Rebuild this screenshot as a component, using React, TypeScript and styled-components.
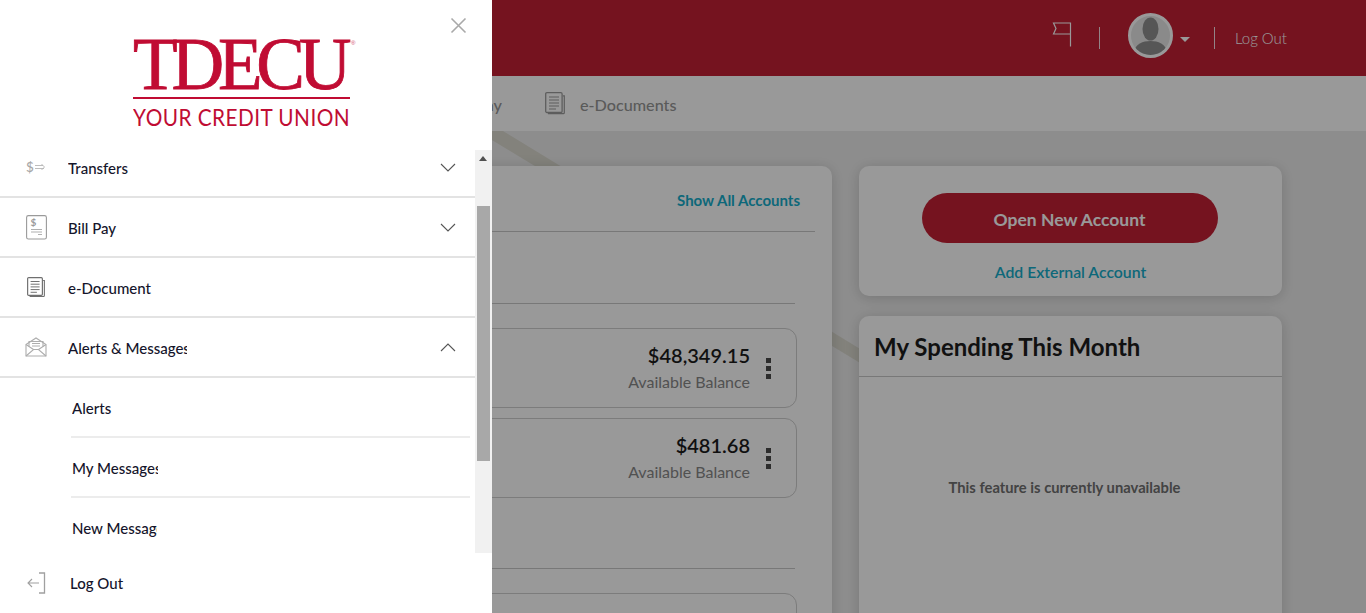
import React from "react";
import styled, { createGlobalStyle } from "styled-components";

const Global = createGlobalStyle`
  html, body { margin: 0; padding: 0; height: 100%; overflow: hidden; }
  body { font-family: Lato, "Liberation Sans", sans-serif; background: #ececec; }
  * { box-sizing: border-box; }
`;

const Page = styled.div`
  position: relative;
  width: 1366px;
  height: 613px;
  overflow: hidden;
  background: #ececec;
`;

/* ---------- page behind the drawer ---------- */
const Header = styled.header`
  height: 76px;
  background: #c32035;
  display: flex;
  align-items: center;
  justify-content: flex-end;
  padding-right: 79px;
  color: #fff;
`;
const FlagWrap = styled.div`
  display: flex;
  margin: -8px 27px 0 0;
`;
const VRule = styled.div`
  width: 1px;
  height: 22px;
  background: #ffffff;
  opacity: 0.85;
`;
const Avatar = styled.div`
  width: 45px;
  height: 45px;
  border-radius: 50%;
  border: 3px solid #fff;
  background: #e6e6e6;
  overflow: hidden;
  margin: -6px 7px 0 28px;
  display: flex;
`;
const Caret = styled.div`
  width: 0;
  height: 0;
  border-left: 5px solid transparent;
  border-right: 5px solid transparent;
  border-top: 5px solid #fff;
  margin: 2px 24px 0 0;
`;
const HeaderLink = styled.span`
  font-size: 15px;
  font-weight: 300;
  margin: -1px 0 0 20px;
`;
const Nav = styled.nav`
  height: 55px;
  background: #ffffff;
  display: flex;
  align-items: center;
  padding: 1px 0 0 450px;
`;
const NavText = styled.span`
  font-size: 16.2px;
  font-weight: 500;
  color: #969696;
`;
const NavIcon = styled.span`
  display: flex;
  margin: -2px 15px 0 43px;
`;
const Main = styled.main`
  position: relative;
  display: grid;
  grid-template-columns: 748px 423px;
  column-gap: 27px;
  align-items: start;
  padding: 35px 0 0 84px;
`;
const Stripe = styled.svg`
  position: absolute;
  left: 0;
  top: 0;
  width: 1366px;
  height: 482px;
`;
const Card = styled.section<{ $h?: number }>`
  position: relative;
  background: #fff;
  border-radius: 10px;
  box-shadow: 0 2px 14px rgba(0, 0, 0, 0.17);
  ${(p) => (p.$h ? `height: ${p.$h}px;` : "")}
`;
const Column = styled.div`
  display: flex;
  flex-direction: column;
  gap: 20px;
`;
const AccountsHead = styled.div`
  height: 66px;
  margin: 0 17px;
  padding: 2px 15px 0 0;
  border-bottom: 1px solid #c9c9c9;
  display: flex;
  align-items: center;
  justify-content: flex-end;
`;
const TealLink = styled.a`
  color: #17aecb;
  font-weight: 700;
  font-size: 15px;
`;
const Section = styled.div`
  margin: 0 37px 0 17px;
  height: 72px;
  border-bottom: 1px solid #c9c9c9;
`;
const Rows = styled.div`
  display: flex;
  flex-direction: column;
  gap: 10px;
  padding: 24px 35px 0 17px;
`;
const AccountRow = styled.div`
  height: 80px;
  border: 1px solid #cfcfcf;
  border-radius: 12px;
  display: flex;
  justify-content: flex-end;
  align-items: center;
  padding-right: 25px;
`;
const Balance = styled.div`
  text-align: right;
  display: flex;
  flex-direction: column;
  gap: 3px;
  margin-top: -1px;
  transform: translateY(-1px);
`;
const Amount = styled.div`
  font-size: 20px;
  font-weight: 600;
  color: #1c1c1c;
  line-height: 28px;
`;
const BalanceLabel = styled.div`
  font-size: 16px;
  color: #888888;
  line-height: 20px;
`;
const Dots = styled.div`
  display: flex;
  flex-direction: column;
  gap: 3px;
  margin: 0 0 0 16px;
`;
const Dot = styled.i`
  display: block;
  width: 5px;
  height: 5px;
  background: #4a4a4a;
`;
const Divider = styled.div`
  margin: 70px 37px 0 17px;
  border-bottom: 1px solid #c9c9c9;
`;
const OpenCard = styled(Card)`
  height: 130px;
  display: flex;
  flex-direction: column;
  align-items: center;
  padding: 27px 0 0 0;
`;
const OpenButton = styled.button`
  width: 296px;
  height: 50px;
  margin-right: 2px;
  border: 0;
  border-radius: 25px;
  background: #c32035;
  color: #fff;
  font: 700 17.5px Lato, sans-serif;
  padding: 2px 0 0;
`;
const AddLink = styled(TealLink)`
  margin-top: 19px;
  line-height: 20px;
  font-size: 15.8px;
  font-weight: 600;
`;
const SpendTitle = styled.h2`
  margin: 0;
  height: 61px;
  padding: 0 0 0 15px;
  display: flex;
  align-items: center;
  font-size: 24px;
  font-weight: 700;
  color: #1d1d1d;
  border-bottom: 1px solid #c9c9c9;
`;
const Unavailable = styled.div`
  padding-top: 101px;
  text-align: center;
  font-size: 14.75px;
  font-weight: 700;
  color: #707070;
  margin-right: 12px;
`;

/* ---------- overlay + drawer ---------- */
const Backdrop = styled.div`
  position: absolute;
  inset: 0;
  background: rgba(0, 0, 0, 0.4);
`;
const Drawer = styled.aside`
  position: absolute;
  left: 0;
  top: 0;
  width: 492px;
  height: 613px;
  background: #fff;
  display: flex;
  flex-direction: column;
`;
const Close = styled.button`
  position: absolute;
  left: 450px;
  top: 17px;
  width: 17px;
  height: 17px;
  padding: 0;
  border: 0;
  background: none;
  display: flex;
`;
const Logo = styled.div`
  height: 150px;
  padding: 32px 0 0 133px;
  color: #c00c33;
  display: flex;
  flex-direction: column;
  flex: none;
`;
const LogoMark = styled.div`
  position: relative;
  font-family: "Liberation Serif", serif;
  font-size: 73px;
  line-height: 66px;
  height: 65px;
  letter-spacing: -6.2px;
  white-space: nowrap;
  -webkit-text-stroke: 0.8px #c00c33;
`;
const Reg = styled.sup`
  position: absolute;
  left: 218px;
  top: 8px;
  font: 400 6px/6px "Liberation Sans", sans-serif;
  letter-spacing: 0;
  color: #d0496a;
  -webkit-text-stroke: 0;
`;
const LogoRule = styled.div`
  width: 217px;
  height: 2px;
  background: #c00c33;
`;
const LogoTag = styled.div`
  font-size: 23.5px;
  font-weight: 400;
  line-height: 24px;
  margin-top: 6px;
  letter-spacing: 0.5px;
  white-space: nowrap;
  transform: scaleX(0.885);
  transform-origin: 0 0;
`;
const Scroller = styled.div`
  height: 403px;
  display: flex;
  flex: none;
  overflow: hidden;
`;
const List = styled.ul`
  list-style: none;
  margin: -12px 0 0;
  padding: 0;
  width: 475px;
  flex: none;
`;
const Row = styled.li`
  height: 60px;
  border-bottom: 2px solid #e3e3e3;
  display: flex;
  align-items: center;
  padding: 0 19px 0 25px;
  color: #15152b;
  font-size: 15px;
  font-weight: 500;
`;
const IconCell = styled.span`
  width: 22px;
  height: 26px;
  margin-right: 21px;
  display: flex;
  align-items: center;
  justify-content: center;
  flex: none;
`;
const RowLabel = styled.span<{ $w?: number }>`
  flex: ${(p) => (p.$w ? "none" : "1")};
  ${(p) => (p.$w ? `width: ${p.$w}px;` : "")}
  overflow: hidden;
  white-space: nowrap;
  padding-top: 2px;
`;
const Chevron = styled.svg`
  margin-left: auto;
  flex: none;
`;
const SubRow = styled.li<{ $last?: boolean }>`
  height: 60px;
  margin: 0 5px 0 71px;
  padding-left: 1px;
  border-bottom: 2px solid ${(p) => (p.$last ? "transparent" : "#ececec")};
  display: flex;
  align-items: center;
  color: #15152b;
  font-size: 15px;
  font-weight: 500;
`;
const Track = styled.div`
  width: 17px;
  background: #f1f1f1;
  position: relative;
  flex: none;
  padding-top: 56px;
`;
const TrackArrow = styled.i`
  position: absolute;
  left: 4px;
  top: 6px;
  width: 0;
  height: 0;
  border-left: 4px solid transparent;
  border-right: 4px solid transparent;
  border-bottom: 5px solid #505050;
`;
const Thumb = styled.div`
  width: 13px;
  height: 255px;
  margin-left: 2px;
  background: #a8a8a8;
`;
const Footer = styled.div`
  height: 60px;
  display: flex;
  align-items: center;
  padding-left: 26px;
  color: #15152b;
  font-size: 15px;
  font-weight: 500;
`;
const FooterIcon = styled.span`
  width: 22px;
  display: flex;
  margin-right: 22px;
`;

/* ---------- drawings ---------- */
const DocIcon = ({ s = 18, c = "#6f6f6f" }: { s?: number; c?: string }) => (
  <svg width={s} height={s * 1.15} viewBox="0 0 20 23" fill="none" stroke={c}>
    <path d="M3.5 20.5v1.2h14.8a1 1 0 0 0 1-1V3.8h-1.4" strokeWidth="1.2" />
    <rect x="0.7" y="0.7" width="16.4" height="19.8" rx="1.2" strokeWidth="1.3" />
    <path d="M4 5h10M4 8h10M4 11h10M4 14h10M4 17h7" strokeWidth="1.1" />
  </svg>
);
const TransferIcon = () => (
  <svg width="20" height="14" viewBox="0 0 20 14" fill="none">
    <text x="0" y="12" fontFamily="Lato" fontSize="13.5" fill="#a8a8a8">$</text>
    <path d="M9 5.5h8M9 8.5h9M15.5 4 18.5 7l-3 3" stroke="#b5b5b5" strokeWidth="0.9" />
  </svg>
);
const BillIcon = () => (
  <svg width="21" height="25" viewBox="0 0 21 25" fill="none">
    <rect x="0.6" y="0.6" width="19.8" height="23.4" rx="1.8" stroke="#9a9a9a" strokeWidth="1.1" />
    <text x="4.5" y="11" fontFamily="Lato" fontSize="10" fontWeight="700" fill="#9a9a9a">$</text>
    <path d="M5 14.5h11M5 17h11M12 19.5h4" stroke="#b0b0b0" strokeWidth="1.2" />
  </svg>
);
const MailIcon = () => (
  <svg width="22" height="20" viewBox="0 0 22 20" fill="none" stroke="#adadad" strokeWidth="1.1">
    <path d="M1 7.5 11 1l10 6.5V19H1z" />
    <path d="M1 19l7.5-6.5h5L21 19" />
    <path d="M1 7.5l7.5 5M21 7.5l-7.5 5" />
    <path d="M4 9.5V4.5h14v5M7 6.5h8M7 9h8" />
  </svg>
);
const LogoutIcon = () => (
  <svg width="20" height="22" viewBox="0 0 20 22" fill="none" stroke="#a0a0a0" strokeWidth="1.1">
    <path d="M13 1h5.5v20H13" strokeWidth="1.3" />
    <path d="M2 11h11M6 7l-4 4 4 4" />
  </svg>
);
const ChevronIcon = ({ up }: { up?: boolean }) => (
  <Chevron width="16" height="9" viewBox="0 0 16 9" fill="none" stroke="#555" strokeWidth="1.1">
    <path d={up ? "M1 8l7-7 7 7" : "M1 1l7 7 7-7"} />
  </Chevron>
);

export default function App() {
  return (
    <Page>
      <Global />
      <Header>
        <FlagWrap>
          <svg width="20" height="26" viewBox="0 0 20 26" fill="none" stroke="#fff" strokeWidth="1.2">
            <path d="M18.5 25.5V2H1.5l2.5 5.5L1.5 13h17" />
          </svg>
        </FlagWrap>
        <VRule />
        <Avatar>
          <svg width="39" height="39" viewBox="0 0 39 39">
            <ellipse cx="19.5" cy="13" rx="8" ry="11.5" fill="#8f8f8f" />
            <path d="M3 36c1-8 9-11 16.5-11S35 28 36 36c-5 4-28 4-33 0z" fill="#8f8f8f" />
          </svg>
        </Avatar>
        <Caret />
        <VRule />
        <HeaderLink>Log Out</HeaderLink>
      </Header>
      <Nav>
        <NavText>Bill Pay</NavText>
        <NavIcon>
          <DocIcon s={20} c="#9c9c9c" />
        </NavIcon>
        <NavText>e-Documents</NavText>
      </Nav>
      <Main>
        <Stripe viewBox="0 0 1366 482">
          <polygon points="477,0 503,0 870,224 870,238" fill="#dad9cf" />
        </Stripe>
        <Card $h={600}>
          <AccountsHead>
            <TealLink>Show All Accounts</TealLink>
          </AccountsHead>
          <Section />
          <Rows>
            <AccountRow>
              <Balance>
                <Amount>$48,349.15</Amount>
                <BalanceLabel>Available Balance</BalanceLabel>
              </Balance>
              <Dots><Dot /><Dot /><Dot /></Dots>
            </AccountRow>
            <AccountRow>
              <Balance>
                <Amount>$481.68</Amount>
                <BalanceLabel>Available Balance</BalanceLabel>
              </Balance>
              <Dots><Dot /><Dot /><Dot /></Dots>
            </AccountRow>
          </Rows>
          <Divider />
          <Rows>
            <AccountRow />
          </Rows>
        </Card>
        <Column>
          <OpenCard>
            <OpenButton>Open New Account</OpenButton>
            <AddLink>Add External Account</AddLink>
          </OpenCard>
          <Card $h={400}>
            <SpendTitle>My Spending This Month</SpendTitle>
            <Unavailable>This feature is currently unavailable</Unavailable>
          </Card>
        </Column>
      </Main>
      <Backdrop />
      <Drawer>
        <Close aria-label="Close">
          <svg width="17" height="17" viewBox="0 0 17 17" stroke="#a9a9a9" strokeWidth="1.6" fill="none">
            <path d="M1.5 1.5l14 14M15.5 1.5l-14 14" />
          </svg>
        </Close>
        <Logo>
          <LogoMark>
            TDECU
            <Reg>®</Reg>
          </LogoMark>
          <LogoRule />
          <LogoTag>YOUR CREDIT UNION</LogoTag>
        </Logo>
        <Scroller>
          <List>
            <Row>
              <IconCell><TransferIcon /></IconCell>
              <RowLabel>Transfers</RowLabel>
              <ChevronIcon />
            </Row>
            <Row>
              <IconCell><BillIcon /></IconCell>
              <RowLabel>Bill Pay</RowLabel>
              <ChevronIcon />
            </Row>
            <Row>
              <IconCell><DocIcon /></IconCell>
              <RowLabel>e-Document</RowLabel>
            </Row>
            <Row>
              <IconCell><MailIcon /></IconCell>
              <RowLabel $w={119}>Alerts &amp; Messages</RowLabel>
              <ChevronIcon up />
            </Row>
            <SubRow><RowLabel $w={86}>Alerts</RowLabel></SubRow>
            <SubRow><RowLabel $w={86}>My Messages</RowLabel></SubRow>
            <SubRow $last><RowLabel $w={85}>New Message</RowLabel></SubRow>
          </List>
          <Track>
            <TrackArrow />
            <Thumb />
          </Track>
        </Scroller>
        <Footer>
          <FooterIcon><LogoutIcon /></FooterIcon>
          Log Out
        </Footer>
      </Drawer>
    </Page>
  );
}
